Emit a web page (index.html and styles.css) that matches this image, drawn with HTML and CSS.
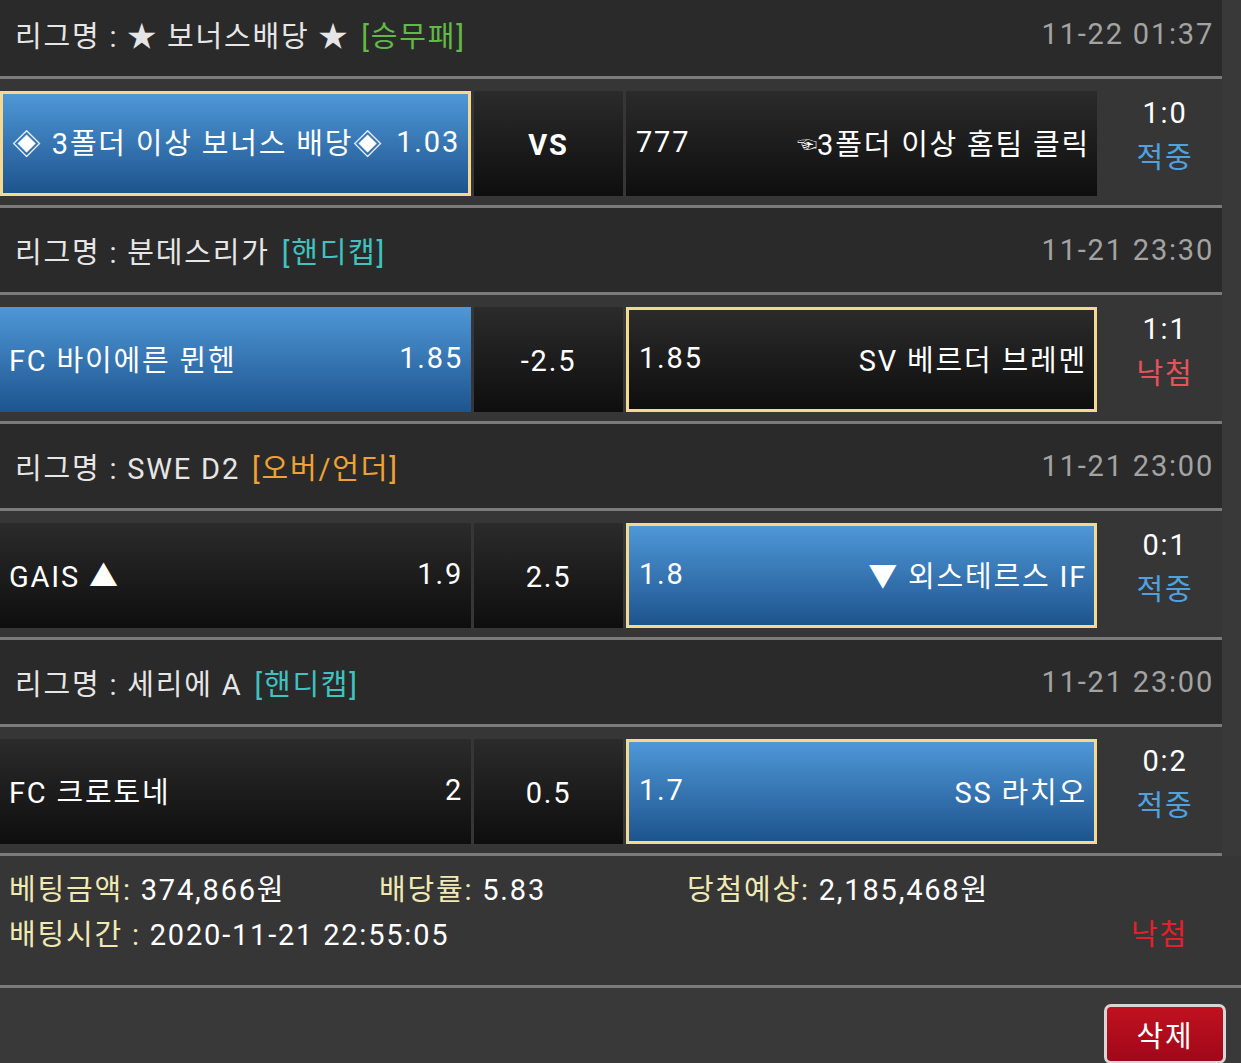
FILE: index.html
```html
<!doctype html>
<html lang="ko">
  <head>
    <meta charset="UTF-8" />
    <meta name="viewport" content="width=device-width, initial-scale=1.0" />
    <title>배팅내역</title>
    <link rel="stylesheet" href="styles.css">
  </head>
  <body>
    <div class="bet-list">
      <div class="match">
        <div class="league">
          <span class="league-name">리그명 : ★ 보너스배당 ★</span>
          <span class="tag tag-1x2">[승무패]</span>
          <span class="time">11-22 01:37</span>
        </div>
        <div class="odds-row">
          <div class="cell team home blue picked"><span>◈ 3폴더 이상 보너스 배당◈</span><span>1.03</span></div>
          <div class="cell mid vs">VS</div>
          <div class="cell team away"><span>777</span><span class="hint"><small>☜</small>3폴더 이상 홈팀 클릭</span></div>
          <div class="result"><div>1:0</div><div class="hit">적중</div></div>
        </div>
      </div>

      <div class="match">
        <div class="league">
          <span class="league-name">리그명 : 분데스리가</span>
          <span class="tag tag-handi">[핸디캡]</span>
          <span class="time">11-21 23:30</span>
        </div>
        <div class="odds-row">
          <div class="cell team home blue"><span>FC 바이에른 뮌헨</span><span>1.85</span></div>
          <div class="cell mid">-2.5</div>
          <div class="cell team away picked"><span>1.85</span><span>SV 베르더 브레멘</span></div>
          <div class="result"><div>1:1</div><div class="miss">낙첨</div></div>
        </div>
      </div>

      <div class="match">
        <div class="league">
          <span class="league-name">리그명 : SWE D2</span>
          <span class="tag tag-ou">[오버/언더]</span>
          <span class="time">11-21 23:00</span>
        </div>
        <div class="odds-row">
          <div class="cell team home"><span>GAIS ▲</span><span>1.9</span></div>
          <div class="cell mid">2.5</div>
          <div class="cell team away blue picked"><span>1.8</span><span>▼ 외스테르스 IF</span></div>
          <div class="result"><div>0:1</div><div class="hit">적중</div></div>
        </div>
      </div>

      <div class="match">
        <div class="league">
          <span class="league-name">리그명 : 세리에 A</span>
          <span class="tag tag-handi">[핸디캡]</span>
          <span class="time">11-21 23:00</span>
        </div>
        <div class="odds-row">
          <div class="cell team home"><span>FC 크로토네</span><span>2</span></div>
          <div class="cell mid">0.5</div>
          <div class="cell team away blue picked"><span>1.7</span><span>SS 라치오</span></div>
          <div class="result"><div>0:2</div><div class="hit">적중</div></div>
        </div>
      </div>
    </div>

    <div class="summary">
      <div class="summary-line">
        <span class="amount"><em>베팅금액:</em> 374,866원</span>
        <span class="rate"><em>배당률:</em> 5.83</span>
        <span><em>당첨예상:</em> 2,185,468원</span>
      </div>
      <div class="summary-line">
        <span><em>배팅시간 :</em> 2020-11-21 22:55:05</span>
        <span class="final-miss">낙첨</span>
      </div>
    </div>

    <div class="actions">
      <button type="button" class="btn-delete">삭제</button>
    </div>
  </body>
</html>
```

FILE: styles.css
```css
body {
  margin: 0;
  background: #393939;
  color: #ffffff;
  font-family: Roboto, "Noto Sans CJK KR", sans-serif;
  font-size: 29px;
  letter-spacing: 1.8px;
  overflow: hidden;
}
.bet-list {
  width: 1222px;
  margin-top: -8px;
}
.league {
  display: flex;
  align-items: center;
  height: 84px;
  padding: 0 8px 0 15px;
  background: #2a2a2a;
  color: #e6e6e6;
  border-bottom: 3px solid #7b7b7b;
}
.tag {
  margin-left: 12px;
}
.tag-1x2 {
  color: #62b947;
}
.tag-handi {
  color: #3ec3c0;
}
.tag-ou {
  color: #efa233;
}
.time {
  margin-left: auto;
  color: #a3a3a3;
}
.odds-row {
  display: grid;
  grid-template-columns: 471px 149px 471px 1fr;
  gap: 3px;
  height: 105px;
  padding: 12px 0 9px;
  background: #363636;
  border-bottom: 3px solid #7b7b7b;
}
.cell {
  box-sizing: border-box;
  display: flex;
  align-items: center;
  background: linear-gradient(#2b2b2b, #0e0e0e);
}
.team {
  justify-content: space-between;
  padding: 0 8px 3px 9px;
}
.away {
  padding: 0 7px 3px 10px;
}
.blue {
  background: linear-gradient(#4f97d7, #1d548e);
}
.picked {
  border: 3px solid #f4d98e;
}
.mid {
  justify-content: center;
  padding-top: 2px;
}
.vs {
  font-weight: bold;
}
.hint small {
  font-size: 20px;
  letter-spacing: 0;
  vertical-align: 3px;
}
.result {
  padding-left: 8px;
  text-align: center;
  line-height: 45px;
}
.hit {
  color: #4ea2e4;
}
.miss {
  color: #e6525c;
}
.summary {
  padding: 12px 0 27px 9px;
  background: #363636;
  border-bottom: 3px solid #7b7b7b;
}
.summary-line {
  display: flex;
  line-height: 45px;
}
.summary em {
  font-style: normal;
  color: #f1e9b3;
}
.amount {
  width: 370px;
}
.rate {
  width: 308px;
}
.final-miss {
  margin-left: auto;
  margin-right: 53px;
  color: #e3202b;
}
.actions {
  display: flex;
  justify-content: flex-end;
  padding: 16px 15px 0 0;
}
.btn-delete {
  width: 122px;
  height: 60px;
  background: linear-gradient(#c0111f, #a0081a);
  color: #ffffff;
  font-family: Roboto, "Noto Sans CJK KR", sans-serif;
  font-size: 29px;
  letter-spacing: 1.8px;
  border: 3px solid #d6d6d6;
  border-radius: 7px;
}
```
